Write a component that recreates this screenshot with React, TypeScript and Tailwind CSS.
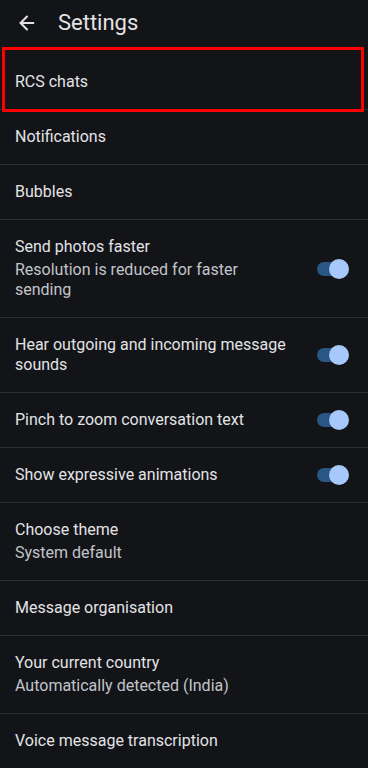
import { ArrowLeft } from "lucide-react";

type Row = {
  title: string;
  sub?: string;
  toggle?: boolean;
};

const rows: Row[] = [
  { title: "Notifications" },
  { title: "Bubbles" },
  {
    title: "Send photos faster",
    sub: "Resolution is reduced for faster sending",
    toggle: true,
  },
  { title: "Hear outgoing and incoming message sounds", toggle: true },
  { title: "Pinch to zoom conversation text", toggle: true },
  { title: "Show expressive animations", toggle: true },
  { title: "Choose theme", sub: "System default" },
  { title: "Message organisation" },
  { title: "Your current country", sub: "Automatically detected (India)" },
  { title: "Voice message transcription" },
];

function Toggle() {
  return (
    <div className="relative w-[32px] h-[20px] shrink-0 flex items-center">
      <div className="w-[28px] h-[14px] rounded-full bg-[#2a5684]" />
      <div className="absolute right-0 top-0 w-[20px] h-[20px] rounded-full bg-[#a8c7fa]" />
    </div>
  );
}

function SettingRow({ row }: { row: Row }) {
  return (
    <div className="flex items-center justify-between pl-[15px] pr-[19px] py-[17px] border-t border-[#2a2d32]">
      <div className="w-[274px] flex flex-col gap-[3px]">
        <span className="text-[16px] leading-5 text-[#e3e3e6]">{row.title}</span>
        {row.sub && (
          <span className="text-[16px] leading-5 text-[#c2c4ca]">{row.sub}</span>
        )}
      </div>
      {row.toggle && <Toggle />}
    </div>
  );
}

export default function App() {
  return (
    <div
      className="w-[368px] h-[768px] overflow-hidden bg-[#121418] text-[#e3e3e6]"
      style={{ fontFamily: "Roboto, 'Noto Sans', sans-serif" }}
    >
      {/* Header */}
      <div className="h-[54px] flex items-start pt-[9px] pl-[16px] gap-[20px]">
        <ArrowLeft size={22} strokeWidth={2.2} className="text-[#e3e3e6] mt-[3px]" />
        <h1 className="text-[22px] leading-7 text-[#e3e3e6]">Settings</h1>
      </div>

      {/* RCS chats, highlighted */}
      <div className="relative">
        <div className="pl-[15px] h-[55px] flex items-center">
          <span className="text-[16px] leading-5">RCS chats</span>
        </div>
        <div className="absolute left-[2px] top-[-7px] w-[362px] h-[65px] border-[3px] border-[#ff0000] pointer-events-none" />
      </div>

      {rows.map((r) => (
        <SettingRow key={r.title} row={r} />
      ))}
    </div>
  );
}
